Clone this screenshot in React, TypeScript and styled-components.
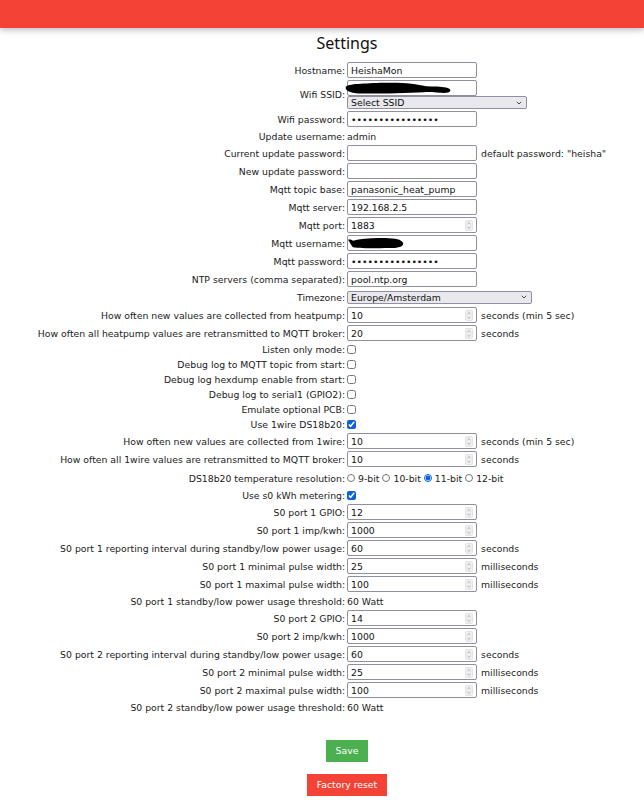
import React from "react";
import styled, { createGlobalStyle } from "styled-components";

const Global = createGlobalStyle`
  html, body { margin: 0; padding: 0; background: #fff; }
  body {
    font-family: "DejaVu Sans", Verdana, sans-serif;
    font-size: 9.3px;
    color: #1a1a1a;
  }
`;

const TopBar = styled.header`
  height: 28px;
  background: #f44336;
  box-shadow: 0 2px 5px 0 rgba(0, 0, 0, 0.16), 0 2px 10px 0 rgba(0, 0, 0, 0.12);
`;

const Title = styled.h2`
  margin: 4px 0 6px;
  padding-left: 50px;
  font-family: "Noto Sans", "Open Sans", sans-serif;
  font-weight: 400;
  font-size: 16px;
  line-height: 22px;
  text-align: center;
  color: #111;
`;

const Table = styled.table`
  margin: 0 auto;
  border-collapse: separate;
  border-spacing: 2px;
`;

const Row = styled.tr<{ $h?: number }>`
  height: ${(p) => p.$h ?? 14}px;
`;

const Label = styled.td`
  padding: 0;
  text-align: right;
  white-space: nowrap;
  vertical-align: middle;
  line-height: 13px;
`;

const Value = styled.td`
  padding: 0;
  text-align: left;
  white-space: nowrap;
  vertical-align: middle;
  line-height: 13px;
`;

const Line = styled.div`
  display: flex;
  align-items: center;
  gap: 4px;
`;

const Stack = styled.div`
  display: flex;
  flex-direction: column;
  align-items: flex-start;
`;

const Redacted = styled.div`
  position: relative;
  display: inline-flex;
`;

const Blob = styled.svg<{ $l: number; $t: number }>`
  position: absolute;
  left: ${(p) => p.$l}px;
  top: ${(p) => p.$t}px;
  pointer-events: none;
`;

const TextInput = styled.input`
  box-sizing: border-box;
  width: 130px;
  height: 16px;
  margin: 0;
  padding: 0 3px;
  border: 1px solid #8f8f9d;
  border-radius: 2px;
  font: inherit;
  color: #111;
  background: #fff;
  outline: none;
`;

const NumberBox = styled.div`
  box-sizing: border-box;
  display: inline-flex;
  align-items: center;
  width: 130px;
  height: 16px;
  border: 1px solid #8f8f9d;
  border-radius: 2px;
  background: #fff;
  padding: 0 3px 0 3px;
`;

const NumberField = styled.input`
  flex: 1;
  min-width: 0;
  border: 0;
  padding: 0;
  margin: 0;
  font: inherit;
  color: #111;
  background: transparent;
  outline: none;
`;

const SelectBox = styled.div<{ $w: number }>`
  box-sizing: border-box;
  display: inline-flex;
  align-items: center;
  width: ${(p) => p.$w}px;
  height: 13px;
  border: 1px solid #8f8f9d;
  border-radius: 2px;
  background: #e9e9ed;
  padding: 0 4px 0 3px;
`;

const NativeSelect = styled.select`
  appearance: none;
  flex: 1;
  min-width: 0;
  border: 0;
  background: transparent;
  font: inherit;
  padding: 0;
  margin: 0;
  color: #111;
  outline: none;
  height: 11px;
  line-height: 11px;
`;

const Check = styled.input`
  width: 9px;
  height: 9px;
  margin: 0;
  accent-color: #0b61d6;
`;

const Radio = styled.input`
  width: 8px;
  height: 8px;
  margin: 0 1px 0 0;
  accent-color: #0b61d6;
`;

const RadioGroup = styled.div`
  display: flex;
  align-items: center;
  gap: 3px;
`;

const RadioItem = styled.label`
  display: inline-flex;
  align-items: center;
  gap: 2px;
`;

const Actions = styled.div`
  display: flex;
  flex-direction: column;
  align-items: center;
  gap: 12px;
  margin-top: 24px;
  padding-left: 50px;
`;

const Button = styled.button<{ $color: string }>`
  background: ${(p) => p.$color};
  color: #fff;
  border: 0;
  font: inherit;
  padding: 5px 10px;
  line-height: 12px;
  cursor: pointer;
`;

const Spinner = () => (
  <svg width="8" height="11" viewBox="0 0 8 11">
    <rect x="0.5" y="0.5" width="7" height="10" rx="1" fill="#efefef" stroke="#e2e2e2" />
    <path d="M2.5 4 L4 2.6 L5.5 4" fill="none" stroke="#a0a0a0" strokeWidth="0.8" />
    <path d="M2.5 7 L4 8.4 L5.5 7" fill="none" stroke="#a0a0a0" strokeWidth="0.8" />
  </svg>
);

const Chevron = () => (
  <svg width="6" height="4" viewBox="0 0 6 4">
    <path d="M0.8 0.8 L3 3 L5.2 0.8" fill="none" stroke="#333" strokeWidth="0.9" />
  </svg>
);

const Num = ({ value }: { value: string }) => (
  <NumberBox>
    <NumberField type="text" defaultValue={value} />
    <Spinner />
  </NumberBox>
);

const Select = ({ w, value }: { w: number; value: string }) => (
  <SelectBox $w={w}>
    <NativeSelect defaultValue={value}>
      <option>{value}</option>
    </NativeSelect>
    <Chevron />
  </SelectBox>
);

const TextRow = ({ label, children }: { label: string; children: React.ReactNode }) => (
  <Row>
    <Label>{label}</Label>
    <Value>{children}</Value>
  </Row>
);

const InputRow = ({ label, value, type = "text" }: { label: string; value: string; type?: string }) => (
  <Row $h={16}>
    <Label>{label}</Label>
    <Value>
      <Line>
        <TextInput type={type} defaultValue={value} />
      </Line>
    </Value>
  </Row>
);

const NumRow = ({ label, value, unit }: { label: string; value: string; unit?: string }) => (
  <Row $h={16}>
    <Label>{label}</Label>
    <Value>
      <Line>
        <Num value={value} />
        {unit && <span>{unit}</span>}
      </Line>
    </Value>
  </Row>
);

const CheckRow = ({ label, checked = false }: { label: string; checked?: boolean }) => (
  <Row $h={13}>
    <Label>{label}</Label>
    <Value>
      <Line>
        <Check type="checkbox" defaultChecked={checked} />
      </Line>
    </Value>
  </Row>
);

const s0Port = (n: number, gpio: string) => (
  <>
    <NumRow label={`S0 port ${n} GPIO:`} value={gpio} />
    <NumRow label={`S0 port ${n} imp/kwh:`} value="1000" />
    <NumRow label={`S0 port ${n} reporting interval during standby/low power usage:`} value="60" unit="seconds" />
    <NumRow label={`S0 port ${n} minimal pulse width:`} value="25" unit="milliseconds" />
    <NumRow label={`S0 port ${n} maximal pulse width:`} value="100" unit="milliseconds" />
    <TextRow label={`S0 port ${n} standby/low power usage threshold:`}>60 Watt</TextRow>
  </>
);

export default function App() {
  return (
    <>
      <Global />
      <TopBar />
      <Title>Settings</Title>
      <form onSubmit={(e) => e.preventDefault()}>
        <Table>
          <tbody>
            <InputRow label="Hostname:" value="HeishaMon" />
            <Row>
              <Label>Wifi SSID:</Label>
              <Value>
                <Stack>
                  <Redacted>
                    <TextInput type="text" defaultValue="" />
                    <Blob $l={-3} $t={2} width="108" height="12" viewBox="0 0 108 13" preserveAspectRatio="none">
                      <path
                        d="M2,5 C4,2 20,1.5 40,0.8 C60,0.2 72,2 82,4.5 C90,5 97,4.5 102,6 C107,7 108,10 104,11.5 C98,12.5 90,10.5 80,11 C60,12 35,12.8 15,12.5 C6,12.3 0,9 2,5 Z"
                        fill="#000"
                      />
                    </Blob>
                  </Redacted>
                  <Select w={180} value="Select SSID" />
                </Stack>
              </Value>
            </Row>
            <InputRow label="Wifi password:" value="xxxxxxxxxxxxxxxx" type="password" />
            <TextRow label="Update username:">admin</TextRow>
            <Row $h={16}>
              <Label>Current update password:</Label>
              <Value>
                <Line>
                  <TextInput type="password" defaultValue="" />
                  <span>default password: "heisha"</span>
                </Line>
              </Value>
            </Row>
            <InputRow label="New update password:" value="" type="password" />
            <InputRow label="Mqtt topic base:" value="panasonic_heat_pump" />
            <InputRow label="Mqtt server:" value="192.168.2.5" />
            <NumRow label="Mqtt port:" value="1883" />
            <Row $h={16}>
              <Label>Mqtt username:</Label>
              <Value>
                <Line>
                  <Redacted>
                    <TextInput type="text" defaultValue="" />
                    <Blob $l={1} $t={2} width="56" height="12" viewBox="0 0 57 13" preserveAspectRatio="none">
                      <path
                        d="M0,3 C2,2 4,3 5,4 C15,1 30,0.5 45,1.5 C53,2 57,5 56,8 C55,11.5 48,12 38,12 C25,12.5 12,12 5,11 C3,9 2,6 0,3 Z"
                        fill="#000"
                      />
                    </Blob>
                  </Redacted>
                </Line>
              </Value>
            </Row>
            <InputRow label="Mqtt password:" value="xxxxxxxxxxxxxxxx" type="password" />
            <InputRow label="NTP servers (comma separated):" value="pool.ntp.org" />
            <Row $h={16}>
              <Label>Timezone:</Label>
              <Value>
                <Line>
                  <Select w={185} value="Europe/Amsterdam" />
                </Line>
              </Value>
            </Row>
            <NumRow label="How often new values are collected from heatpump:" value="10" unit="seconds (min 5 sec)" />
            <NumRow label="How often all heatpump values are retransmitted to MQTT broker:" value="20" unit="seconds" />
            <CheckRow label="Listen only mode:" />
            <CheckRow label="Debug log to MQTT topic from start:" />
            <CheckRow label="Debug log hexdump enable from start:" />
            <CheckRow label="Debug log to serial1 (GPIO2):" />
            <CheckRow label="Emulate optional PCB:" />
            <CheckRow label="Use 1wire DS18b20:" checked />
            <NumRow label="How often new values are collected from 1wire:" value="10" unit="seconds (min 5 sec)" />
            <NumRow label="How often all 1wire values are retransmitted to MQTT broker:" value="10" unit="seconds" />
            <Row $h={18}>
              <Label>DS18b20 temperature resolution:</Label>
              <Value>
                <RadioGroup>
                  {["9-bit", "10-bit", "11-bit", "12-bit"].map((r) => (
                    <RadioItem key={r}>
                      <Radio type="radio" name="res" defaultChecked={r === "11-bit"} />
                      {r}
                    </RadioItem>
                  ))}
                </RadioGroup>
              </Value>
            </Row>
            <CheckRow label="Use s0 kWh metering:" checked />
            {s0Port(1, "12")}
            {s0Port(2, "14")}
          </tbody>
        </Table>
        <Actions>
          <Button type="submit" $color="#4caf50">Save</Button>
          <Button type="button" $color="#f44336">Factory reset</Button>
        </Actions>
      </form>
    </>
  );
}
